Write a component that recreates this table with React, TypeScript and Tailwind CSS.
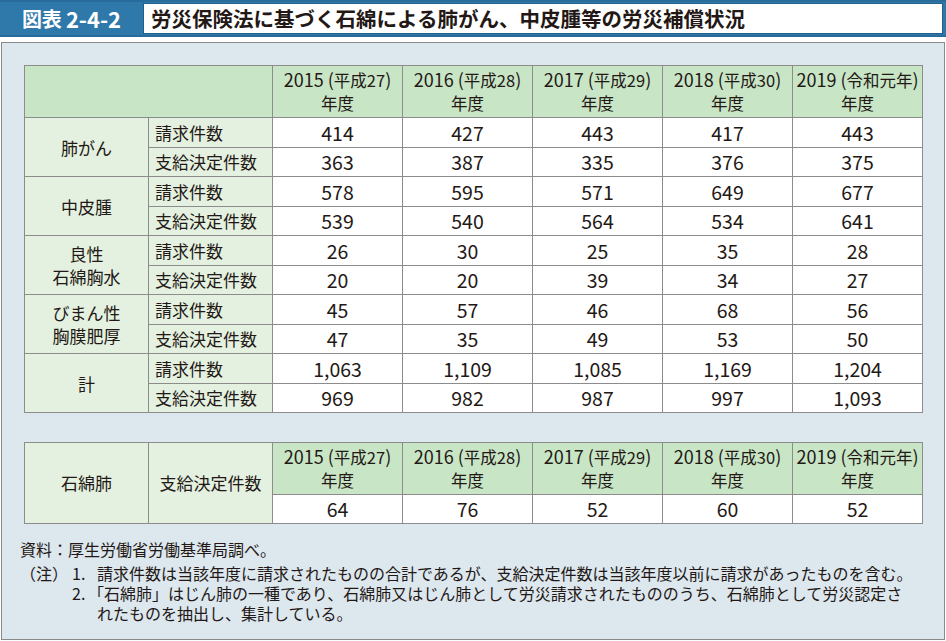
const years: [string, string][] = [
  ['2015', '平成27'],
  ['2016', '平成28'],
  ['2017', '平成29'],
  ['2018', '平成30'],
  ['2019', '令和元年'],
]

const groups: { label: string[]; claims: string[]; granted: string[] }[] = [
  { label: ['肺がん'],           claims: ['414', '427', '443', '417', '443'],               granted: ['363', '387', '335', '376', '375'] },
  { label: ['中皮腫'],           claims: ['578', '595', '571', '649', '677'],               granted: ['539', '540', '564', '534', '641'] },
  { label: ['良性', '石綿胸水'],  claims: ['26', '30', '25', '35', '28'],                    granted: ['20', '20', '39', '34', '27'] },
  { label: ['びまん性', '胸膜肥厚'], claims: ['45', '57', '46', '68', '56'],                 granted: ['47', '35', '49', '53', '50'] },
  { label: ['計'],               claims: ['1,063', '1,109', '1,085', '1,169', '1,204'],     granted: ['969', '982', '987', '997', '1,093'] },
]

const asbestosis = ['64', '76', '52', '60', '52']

// ── Cells ─────────────────────────────────────────────────────────────────────

function YearHead({ y }: { y: [string, string] }) {
  return (
    <div className="bg-[#c8e5c6] flex flex-col items-center justify-center leading-[23px] whitespace-nowrap">
      <span className="text-[18px]">
        {y[0]} (<span className="text-[16.5px]">{y[1]}</span>)
      </span>
      <span className="text-[16.5px]">年度</span>
    </div>
  )
}

function Num({ v }: { v: string }) {
  return <div className="bg-white flex items-center justify-center text-[19.5px]">{v}</div>
}

function Label({ children }: { children: string }) {
  return <div className="bg-[#e4f1e0] flex items-center pl-[6px]">{children}</div>
}

// ── Main ──────────────────────────────────────────────────────────────────────

export default function App() {
  return (
    <div
      className="w-[946px] h-[641px] bg-white text-[#231815] overflow-hidden"
      style={{ fontFamily: '"Noto Sans CJK JP", "Noto Sans", sans-serif' }}
    >
      {/* Title bar */}
      <div className="h-[37px] flex bg-[#2f78aa] border-t-2 border-b-2 border-[#286c9b]">
        <div className="w-[143px] flex items-center justify-center gap-[4px] text-white font-bold">
          <span className="text-[20px]">図表</span>
          <span className="text-[22px]">2-4-2</span>
        </div>
        <div className="flex-1 mr-[3px] my-[1px] bg-white border border-[#245f8a] flex items-center pl-[7px] font-bold text-[20.5px]">
          労災保険法に基づく石綿による肺がん、中皮腫等の労災補償状況
        </div>
      </div>

      {/* Panel */}
      <div className="mt-[5px] ml-px w-[944px] h-[598px] border border-[#8a8a8a] bg-[#dde7ee] pt-[22px] pl-[22px]">
        {/* Main table */}
        <div className="grid grid-cols-[123px_123px_129px_129px_129px_129px_129px] grid-rows-[51px_repeat(10,28.5px)] gap-px bg-[#8c8c8c] p-px w-fit text-[17px]">
          <div className="col-span-2 bg-[#c8e5c6]" />
          {years.map(y => <YearHead key={y[0]} y={y} />)}

          {groups.map(g => (
            <>
              <div key={g.label.join()} className="row-span-2 bg-[#e4f1e0] flex flex-col items-center justify-center leading-[23px]">
                {g.label.map(l => <span key={l}>{l}</span>)}
              </div>
              <Label>請求件数</Label>
              {g.claims.map((v, i) => <Num key={'c' + i} v={v} />)}
              <Label>支給決定件数</Label>
              {g.granted.map((v, i) => <Num key={'g' + i} v={v} />)}
            </>
          ))}
        </div>

        {/* 石綿肺 table */}
        <div className="mt-[29px] grid grid-cols-[123px_123px_129px_129px_129px_129px_129px] grid-rows-[51px_28px] gap-px bg-[#8c8c8c] p-px w-fit text-[17px]">
          <div className="row-span-2 bg-[#e4f1e0] flex items-center justify-center">石綿肺</div>
          <div className="row-span-2 bg-[#e4f1e0] flex items-center justify-center">支給決定件数</div>
          {years.map(y => <YearHead key={y[0]} y={y} />)}
          {asbestosis.map((v, i) => <Num key={i} v={v} />)}
        </div>

        {/* Notes */}
        <div className="mt-[15px] -ml-[4px] text-[16px] leading-[20px] whitespace-nowrap">
          <div className="mb-[4px]">資料：厚生労働省労働基準局調べ。</div>
          <div className="flex">
            <span className="w-[52px]">（注）</span>
            <span className="w-[25px]">1.</span>
            <span>請求件数は当該年度に請求されたものの合計であるが、支給決定件数は当該年度以前に請求があったものを含む。</span>
          </div>
          <div className="flex">
            <span className="w-[52px]" />
            <span className="w-[25px]">2.</span>
            <span>
              <span className="-ml-[9px]">「石綿肺」はじん肺の一種であり、石綿肺又はじん肺として労災請求されたもののうち、石綿肺として労災認定さ</span>
              <br />
              れたものを抽出し、集計している。
            </span>
          </div>
        </div>
      </div>
    </div>
  )
}
